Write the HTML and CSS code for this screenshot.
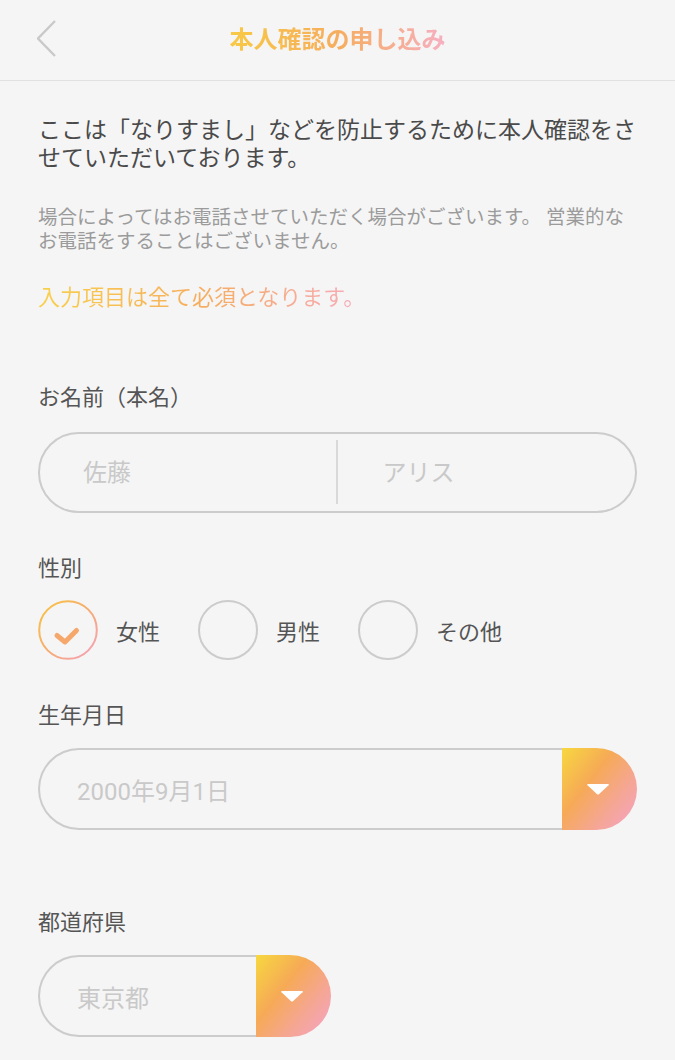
FILE: index.html
```html
<!DOCTYPE html>
<html lang="ja">
<head>
<meta charset="utf-8">
<title>本人確認の申し込み</title>
<link rel="stylesheet" href="styles.css">
</head>
<body>
<header class="topbar">
  <button class="back" aria-label="戻る">
    <svg width="20" height="38" viewBox="0 0 20 38"><polyline points="18,1 1,18.5 18,36" fill="none" stroke="#c9c9c9" stroke-width="2.4"/></svg>
  </button>
  <h1 class="title">本人確認の申し込み</h1>
  <span class="spacer"></span>
</header>
<main class="content">
  <p class="lead">ここは「なりすまし」などを防止するために本人確認をさせていただいております。</p>
  <p class="note">場合によってはお電話させていただく場合がございます。 営業的なお電話をすることはございません。</p>
  <p class="required"><span class="grad-text">入力項目は全て必須となります。</span></p>

  <section class="field field-name">
    <div class="field-label">お名前（本名）</div>
    <div class="name-input">
      <input class="name-part name-last" type="text" placeholder="佐藤">
      <span class="divider"></span>
      <input class="name-part name-first" type="text" placeholder="アリス">
    </div>
  </section>

  <section class="field field-gender">
    <div class="field-label">性別</div>
    <div class="radio-group">
      <label class="radio">
        <input class="radio-input" type="radio" name="gender" checked>
        <span class="radio-mark radio-mark-on">
          <svg width="60" height="60" viewBox="0 0 60 60">
            <defs>
              <linearGradient id="ring" x1="0" y1="0" x2="1" y2="1">
                <stop offset="0" stop-color="#f8c53e"/>
                <stop offset="0.5" stop-color="#f6ac72"/>
                <stop offset="1" stop-color="#f5a0bd"/>
              </linearGradient>
            </defs>
            <circle cx="30" cy="30" r="28.8" fill="none" stroke="url(#ring)" stroke-width="2"/>
            <polyline points="19,35.5 27,42 38.5,30.5" fill="none" stroke="#f6a86c" stroke-width="5" stroke-linecap="round" stroke-linejoin="round"/>
          </svg>
        </span>
        <span class="radio-text">女性</span>
      </label>
      <label class="radio">
        <input class="radio-input" type="radio" name="gender">
        <span class="radio-mark"></span>
        <span class="radio-text">男性</span>
      </label>
      <label class="radio">
        <input class="radio-input" type="radio" name="gender">
        <span class="radio-mark"></span>
        <span class="radio-text">その他</span>
      </label>
    </div>
  </section>

  <section class="field field-birth">
    <div class="field-label">生年月日</div>
    <div class="select select-wide">
      <div class="select-value">2000年9月1日</div>
      <div class="select-btn">
        <svg width="24" height="12" viewBox="0 0 24 12"><path d="M2 1 H22 Q23.5 1 22.5 2.2 L13.2 11 Q12 12 10.8 11 L1.5 2.2 Q0.5 1 2 1 Z" fill="#fff"/></svg>
      </div>
    </div>
  </section>

  <section class="field field-pref">
    <div class="field-label">都道府県</div>
    <div class="select select-narrow">
      <div class="select-value">東京都</div>
      <div class="select-btn">
        <svg width="24" height="12" viewBox="0 0 24 12"><path d="M2 1 H22 Q23.5 1 22.5 2.2 L13.2 11 Q12 12 10.8 11 L1.5 2.2 Q0.5 1 2 1 Z" fill="#fff"/></svg>
      </div>
    </div>
  </section>
</main>
</body>
</html>
```

FILE: styles.css
```css
* {
  box-sizing: border-box;
  margin: 0;
  padding: 0;
}

html, body {
  background: #f5f5f5;
}

body {
  width: 675px;
  font-family: "Roboto", "Noto Sans CJK JP", sans-serif;
  color: #4a4a4a;
}

.topbar {
  height: 81px;
  border-bottom: 1px solid #e1e1e1;
  display: grid;
  grid-template-columns: 1fr auto 1fr;
  align-items: center;
}

.back {
  justify-self: start;
  margin-left: 37px;
  margin-top: -2px;
  width: 20px;
  height: 38px;
  border: 0;
  background: none;
  display: flex;
}

.title {
  font-size: 24px;
  font-weight: 700;
  line-height: 30px;
  background: linear-gradient(90deg, #f8c945 0%, #f6ad5e 50%, #f6afc2 100%);
  -webkit-background-clip: text;
  background-clip: text;
  color: transparent;
}

.content {
  padding: 36px 38px 0;
}

.lead {
  font-size: 23px;
  line-height: 28px;
  color: #4a4a4a;
}

.note {
  margin-top: 33px;
  font-size: 19.5px;
  line-height: 24px;
  color: #9b9b9b;
}

.required {
  margin-top: 30px;
  font-size: 22px;
  line-height: 28px;
}

.grad-text {
  display: inline-block;
  background: linear-gradient(90deg, #f8d04c 0%, #f6ad5e 50%, #f6abbe 100%);
  -webkit-background-clip: text;
  background-clip: text;
  color: transparent;
}

.field-label {
  font-size: 22px;
  line-height: 28px;
  color: #555;
  margin-bottom: 20px;
}

.field-name {
  margin-top: 72px;
}

.field-gender {
  margin-top: 42px;
}

.field-gender .field-label {
  margin-bottom: 17px;
}

.field-birth {
  margin-top: 42px;
}

.field-birth .field-label,
.field-pref .field-label {
  margin-bottom: 18px;
}

.field-pref {
  margin-top: 79px;
}

/* name */
.name-input {
  display: flex;
  height: 81px;
  border: 2px solid #cccccc;
  border-radius: 41px;
}

.name-part {
  flex: 1;
  min-width: 0;
  border: 0;
  background: transparent;
  font-family: "Roboto", "Noto Sans CJK JP", sans-serif;
  font-size: 24px;
  color: #555;
  outline: none;
}

.name-last {
  padding-left: 43px;
}

.name-first {
  padding-left: 45px;
}

.name-part::placeholder {
  color: #c9c9c9;
}

.divider {
  width: 2px;
  background: #d9d9d9;
  margin: 6px 0 7px;
}

/* radios */
.radio-group {
  display: flex;
  gap: 38px;
}

.radio {
  display: flex;
  align-items: center;
  gap: 18px;
  font-size: 22px;
  color: #555;
}

.radio-input {
  display: none;
}

.radio-mark {
  width: 60px;
  height: 60px;
  border: 2px solid #cccccc;
  border-radius: 50%;
  display: block;
}

.radio-mark-on {
  border: 0;
}

.radio-mark svg {
  display: block;
}

/* selects */
.select {
  display: flex;
  height: 82px;
}

.select-wide {
  width: 599px;
}

.select-narrow {
  width: 293px;
}

.select-value {
  flex: 1;
  border: 2px solid #cccccc;
  border-right: 0;
  border-radius: 41px 0 0 41px;
  display: flex;
  align-items: center;
  padding-left: 37px;
  font-size: 24px;
  color: #c9c9c9;
}

.select-btn {
  width: 75px;
  border-radius: 0 41px 41px 0;
  background: linear-gradient(128deg, #f7d83f 0%, #f6aa56 38%, #f5a693 68%, #f4a3c8 100%);
  display: flex;
  align-items: center;
  justify-content: center;
  padding-right: 3px;
}

.select-btn svg {
  display: block;
}
```
